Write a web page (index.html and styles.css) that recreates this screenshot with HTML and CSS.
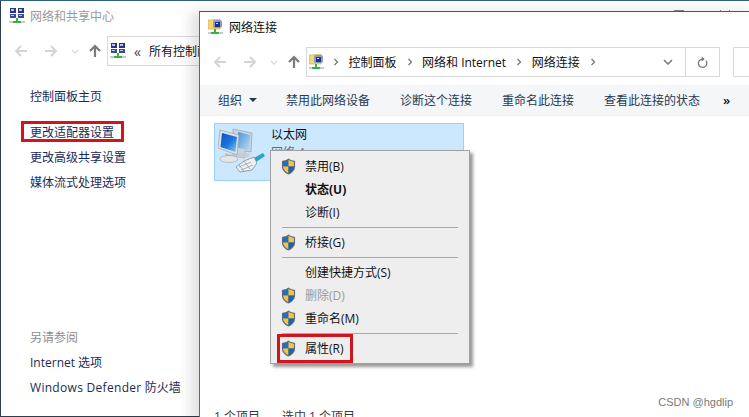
FILE: index.html
```html
<!DOCTYPE html>
<html lang="zh-CN">
<head>
<meta charset="utf-8">
<title>网络连接</title>
<link rel="stylesheet" href="styles.css">
</head>
<body>
<svg class="defs" width="0" height="0" aria-hidden="true">
  <defs>
    <linearGradient id="screen" x1="0" y1="0" x2="1" y2="1">
      <stop offset="0" stop-color="#0b4fc4"/>
      <stop offset=".55" stop-color="#1c78e0"/>
      <stop offset="1" stop-color="#8fd0f5"/>
    </linearGradient>
    <linearGradient id="screen2" x1="0" y1="0" x2="1" y2="1">
      <stop offset="0" stop-color="#4f94d8"/>
      <stop offset="1" stop-color="#b5dcf3"/>
    </linearGradient>
  </defs>
  <symbol id="net" viewBox="0 0 16 16">
    <rect x="0" y="13" width="16" height="2" fill="#c9ccc9"/>
    <path d="M7 10h2v3h3v2H4v-2h3z" fill="#35b04a"/>
    <rect x="1" y="0" width="6" height="5" fill="#26357f"/><rect x="9" y="0" width="6" height="5" fill="#26357f"/>
    <rect x="1" y="6" width="6" height="4" fill="#3a4a9a"/><rect x="9" y="6" width="6" height="4" fill="#3a4a9a"/>
    <rect x="2" y="1" width="3" height="2" fill="#b8c4ea"/><rect x="10" y="1" width="3" height="2" fill="#b8c4ea"/>
    <rect x="2" y="7" width="3" height="1" fill="#b8c4ea"/><rect x="10" y="7" width="3" height="1" fill="#b8c4ea"/>
  </symbol>
  <symbol id="netfolder" viewBox="0 0 16 16">
    <path d="M0 1h4l1-1h7v10H0z" fill="#f3d775" stroke="#c9a93e" stroke-width=".6"/>
    <rect x="5" y="1" width="9" height="8" rx="2" fill="#8d97c9"/>
    <rect x="7" y="3" width="5" height="5" fill="#1f3286"/>
    <rect x="8" y="4" width="2" height="1" fill="#cfe0f7"/>
    <rect x="0" y="13" width="15" height="2" fill="#c9ccc9"/>
    <path d="M6 10h2v3h3v2H3v-2h3z" fill="#35b04a"/>
  </symbol>
  <symbol id="shield" viewBox="0 0 16 18">
    <path d="M8 0.500C6 2 3.500 2.800 1 3v6c0 4 3 7 7 8.500 4-1.500 7-4.500 7-8.500V3C12.500 2.800 10 2 8 0.500z" fill="#5b6b7d"/>
    <path d="M8 1.800V9H2.200V3.900C4.300 3.700 6.300 3 8 1.800z" fill="#1f6fc4"/>
    <path d="M8 1.800C9.700 3 11.700 3.700 13.800 3.900V9H8z" fill="#f5c440"/>
    <path d="M2.200 9H8v7.100C4.700 14.800 2.400 12.300 2.200 9z" fill="#f5c440"/>
    <path d="M8 9h5.800c-.2 3.300-2.500 5.800-5.800 7.100z" fill="#1a62b4"/>
  </symbol>
  <symbol id="arrow-left" viewBox="0 0 14 14">
    <path d="M13 7H2M7 2 2 7l5 5" fill="none" stroke="currentColor" stroke-width="2"/>
  </symbol>
  <symbol id="arrow-right" viewBox="0 0 14 14">
    <path d="M1 7h11M7 2l5 5-5 5" fill="none" stroke="currentColor" stroke-width="2"/>
  </symbol>
  <symbol id="arrow-up" viewBox="0 0 14 14">
    <path d="M7 13V2M2 7l5-5 5 5" fill="none" stroke="currentColor" stroke-width="2.200"/>
  </symbol>
  <symbol id="chev-down" viewBox="0 0 10 6">
    <path d="M1 1l4 4 4-4" fill="none" stroke="currentColor" stroke-width="1.500"/>
  </symbol>
  <symbol id="crumb" viewBox="0 0 6 8">
    <path d="M1.500 1l3 3-3 3" fill="none" stroke="#777" stroke-width="1.300"/>
  </symbol>
</svg>

<main class="desktop">
  <section class="window back">
    <div class="controls"><i class="ctl-max"></i><i class="ctl-close"></i></div>
    <header class="titlebar back-title">
      <svg class="icon16"><use href="#net"/></svg>
      <span class="title-muted">网络和共享中心</span>
    </header>
    <div class="navrow">
      <svg class="nav-arrow off"><use href="#arrow-left"/></svg>
      <svg class="nav-arrow off gap-arrow"><use href="#arrow-right"/></svg>
      <svg class="nav-chev"><use href="#chev-down"/></svg>
      <svg class="nav-arrow up"><use href="#arrow-up"/></svg>
      <div class="address back-address">
        <svg class="icon16"><use href="#net"/></svg>
        <span class="addr-quote">«</span>
        <span class="addr-text">所有控制面板项</span>
      </div>
    </div>
    <nav class="sidebar">
      <a class="side-link home">控制面板主页</a>
      <a class="side-link marked">更改适配器设置</a>
      <a class="side-link">更改高级共享设置</a>
      <a class="side-link">媒体流式处理选项</a>
      <div class="side-spacer"></div>
      <span class="side-head">另请参阅</span>
      <a class="side-link">Internet 选项</a>
      <a class="side-link"><span class="latin">Windows Defender</span> 防火墙</a>
    </nav>
  </section>

  <section class="window front">
    <header class="titlebar">
      <svg class="icon16"><use href="#netfolder"/></svg>
      <span class="title-dark">网络连接</span>
    </header>
    <div class="navrow front-nav">
      <svg class="nav-arrow off"><use href="#arrow-left"/></svg>
      <svg class="nav-arrow off gap-arrow"><use href="#arrow-right"/></svg>
      <svg class="nav-chev"><use href="#chev-down"/></svg>
      <svg class="nav-arrow up"><use href="#arrow-up"/></svg>
      <div class="address front-address">
        <svg class="icon16"><use href="#netfolder"/></svg>
        <svg class="crumb first"><use href="#crumb"/></svg>
        <span class="addr-text">控制面板</span>
        <svg class="crumb"><use href="#crumb"/></svg>
        <span class="addr-text">网络和 Internet</span>
        <svg class="crumb"><use href="#crumb"/></svg>
        <span class="addr-text">网络连接</span>
        <svg class="crumb"><use href="#crumb"/></svg>
        <svg class="addr-chev"><use href="#chev-down"/></svg>
        <span class="addr-refresh">
          <svg class="refresh" viewBox="0 0 12 14"><path d="M9.800 5A4.600 4.600 0 1 1 6 3.200" fill="none" stroke="#777" stroke-width="1.400"/><path d="M5.200 0.500 8.500 3.200 5.200 5.800z" fill="#777"/></svg>
        </span>
      </div>
      <div class="searchbox"></div>
    </div>
    <div class="toolbar">
      <span class="tool tool-org">组织<i class="caret"></i></span>
      <span class="tool tool-a">禁用此网络设备</span>
      <span class="tool tool-b">诊断这个连接</span>
      <span class="tool tool-c">重命名此连接</span>
      <span class="tool tool-d">查看此连接的状态</span>
      <span class="tool tool-more">»</span>
    </div>
    <div class="content">
      <div class="conn">
        <svg class="conn-icon" viewBox="0 0 48 48">
          <path d="M15 1 34 5 33 24 27 23 27 30 15 28z" fill="#cdd3d9" stroke="#8f99a3" stroke-width=".6"/>
          <path d="M20 4 32 7 31 22 20 20z" fill="url(#screen2)"/>
          <ellipse cx="25" cy="27" rx="7" ry="2.500" fill="#c7ccd1"/>
          <path d="M2 2 21 7 19 27 0 20z" fill="#dde2e7" stroke="#8f99a3" stroke-width=".6"/>
          <path d="M4 5 19 9 17.500 24 2.500 19z" fill="url(#screen)"/>
          <path d="M7 25 15 27 14 30 7 28z" fill="#bfc5ca"/>
          <ellipse cx="11" cy="31" rx="9" ry="3.500" fill="#e4e6e8" stroke="#9aa0a6" stroke-width=".6"/>
          <path d="M36 30 45 25 47 28 38 34z" fill="#2aa3c9"/>
          <path d="M26 33 36 29 39 35 34 42 22 44 18 39z" fill="#eef1f2" stroke="#7f8a8f" stroke-width=".8"/>
          <path d="M21 39 33 34M23 42 35 37M26 33l6 8M21 37l5 6" stroke="#8b969b" stroke-width=".7" fill="none"/>
        </svg>
        <div class="conn-text">
          <span class="conn-name">以太网</span>
          <span class="conn-sub">网络 4</span>
        </div>
      </div>
    </div>
    <footer class="statusbar">
      <span class="status-count">1 个项目</span>
      <span class="status-sel">选中 1 个项目</span>
    </footer>
  </section>

  <div class="menu">
    <div class="mi"><svg class="shield"><use href="#shield"/></svg>禁用(B)</div>
    <div class="mi strong">状态(U)</div>
    <div class="mi">诊断(I)</div>
    <hr class="sep">
    <div class="mi"><svg class="shield"><use href="#shield"/></svg>桥接(G)</div>
    <hr class="sep">
    <div class="mi">创建快捷方式(S)</div>
    <div class="mi disabled"><svg class="shield"><use href="#shield"/></svg>删除(D)</div>
    <div class="mi"><svg class="shield"><use href="#shield"/></svg>重命名(M)</div>
    <hr class="sep">
    <div class="mi marked-item"><svg class="shield"><use href="#shield"/></svg>属性(R)</div>
  </div>

  <span class="watermark">CSDN @hgdlip</span>
</main>
</body>
</html>
```

FILE: styles.css
```css
*, *::after { box-sizing: border-box; }
html, body { margin: 0; padding: 0; }
body { width: 749px; height: 417px; overflow: hidden; background: #fff; }
.defs { position: absolute; }
.desktop {
  position: relative;
  width: 749px;
  height: 417px;
  overflow: hidden;
  background: #2f5f80;
  font: 12px/17px "Open Sans", "Noto Sans CJK SC", sans-serif;
  color: #1a1a1a;
}
.window { position: absolute; background: #fff; display: flex; flex-direction: column; }
.back {
  left: 0; top: 1px; width: 749px; height: 416px;
  padding-left: 1px;
  border-left: 1px solid #2c3e50;
  border-bottom: 1px solid #2c3e50;
}
.controls { position: absolute; top: 9px; left: 673px; display: flex; gap: 36px; }
.ctl-max { width: 10px; height: 10px; border: 1px solid #888; }
.ctl-close { width: 10px; height: 10px; background: linear-gradient(45deg, transparent 45%, #888 45%, #888 55%, transparent 55%), linear-gradient(-45deg, transparent 45%, #888 45%, #888 55%, transparent 55%); }
.front {
  left: 199px; top: 11px; width: 560px; height: 414px;
  border-left: 1px solid #5d6a73;
  border-top: 1px solid #55585a;
  box-shadow: -8px 0 12px rgba(0, 0, 0, .12);
}
.icon16 { width: 16px; height: 16px; flex: none; }
.titlebar { display: flex; align-items: center; height: 30px; padding: 0 0 0 8px; gap: 5px; flex: none; }
.back-title { padding-left: 7px; }
.title-muted { color: #9a9a9a; }
.title-dark { color: #111; }
.navrow { display: flex; align-items: center; height: 30px; margin-top: 5px; padding-left: 12px; flex: none; }
.front-nav { padding-left: 13px; }
.nav-arrow { width: 14px; height: 14px; flex: none; }
.nav-arrow.off { color: #d4d4d4; }
.gap-arrow { margin-left: 16px; }
.nav-chev { width: 8px; height: 5px; margin-left: 13px; color: #d8d8d8; flex: none; }
.nav-arrow.up { color: #7a7a7a; margin-left: 9px; }
.address {
  display: flex;
  align-items: center;
  height: 30px;
  border: 1px solid #d9d9d9;
  background: #fff;
  flex: none;
  white-space: nowrap;
}
.back-address { width: 300px; margin-left: 5px; padding-left: 2px; }
.addr-quote { margin-left: 8px; font-size: 14px; color: #444; }
.addr-text { color: #111; }
.back-address .addr-text { margin-left: 8px; }
.front-address { width: 414px; margin-left: 5px; padding-left: 2px; }
.crumb { width: 6px; height: 8px; margin: 0 9.500px 0 10px; flex: none; }
.crumb.first { margin-left: 8px; }
.addr-chev { width: 10px; height: 6px; margin-left: auto; margin-right: 12px; color: #777; flex: none; }
.addr-refresh {
  width: 34px; height: 28px; border-left: 1px solid #d9d9d9;
  display: flex; align-items: center; justify-content: center; flex: none;
}
.refresh { width: 11px; height: 13px; }
.searchbox { width: 40px; height: 30px; margin-left: 13px; border: 1px solid #d9d9d9; flex: none; }
.toolbar {
  display: flex;
  align-items: center;
  height: 31px;
  margin-top: 8px;
  background: #f5f6f7;
  border-bottom: 1px solid #eef0f2;
  color: #1f3a55;
  white-space: nowrap;
  flex: none;
}
.tool { flex: none; }
.tool-org { margin-left: 18px; display: flex; align-items: center; }
.caret {
  width: 0; height: 0; margin-left: 7px;
  border: 4px solid transparent; border-top: 4px solid #1f3a55; border-bottom: 0;
}
.tool-a { margin-left: 29px; }
.tool-b { margin-left: 30px; }
.tool-c { margin-left: 30px; }
.tool-d { margin-left: 30px; }
.tool-more { margin-left: 23px; color: #111; font-size: 13px; font-weight: 600; }
.content { flex: 1; padding: 7px 0 0 14px; }
.conn {
  display: flex;
  width: 250px;
  height: 58px;
  background: #cce8ff;
  border: 1px solid #99d1ff;
}
.conn-icon { width: 48px; height: 48px; margin: 4px 0 0 3px; flex: none; }
.conn-text { display: flex; flex-direction: column; margin: 2px 0 0 5px; }
.conn-name { color: #111; line-height: 18px; }
.conn-sub { color: #6d6d6d; line-height: 18px; }
.statusbar { display: flex; height: 17px; padding-left: 14px; color: #3a3a3a; flex: none; white-space: nowrap; }
.status-sel { margin-left: 22px; }
.sidebar { display: flex; flex-direction: column; padding: 0 0 0 28px; flex: 1; white-space: nowrap; }
.side-link { height: 25px; line-height: 25px; color: #1b2a55; }
.side-link.home { margin: 18px 0 11px; }
.side-link.marked { position: relative; }
.side-link.marked::after {
  content: "";
  position: absolute;
  left: -9px; top: 1px;
  width: 103px; height: 21px;
  border: 3px solid #d3141f;
}
.latin { letter-spacing: .3px; }
.side-spacer { height: 130px; }
.side-head { height: 25px; line-height: 25px; color: #8c8c8c; }
.menu {
  position: absolute;
  left: 270px; top: 150px;
  width: 200px; height: 214px;
  padding: 4px 2px 0 2px;
  background: #eeeeee;
  border: 1px solid #a0a0a0;
  box-shadow: 3px 3px 3px rgba(0, 0, 0, .4);
}
.mi {
  position: relative;
  height: 23px;
  line-height: 23px;
  padding-left: 32px;
  color: #111;
  white-space: nowrap;
}
.shield { position: absolute; left: 8px; top: 3px; width: 15px; height: 17px; }
.strong { font-weight: 700; }
.disabled { color: #9a9a9a; }
.sep { height: 1px; margin: 3px 9px; border: 0; background: #a8a8a8; }
.marked-item::after {
  content: "";
  position: absolute;
  left: 4px; top: -3px;
  width: 76px; height: 29px;
  border: 3px solid #d3141f;
}
.watermark {
  position: absolute;
  right: 16px; top: 394px;
  font: 11px/17px "Liberation Sans", sans-serif;
  color: #7a7a7a;
}
```
